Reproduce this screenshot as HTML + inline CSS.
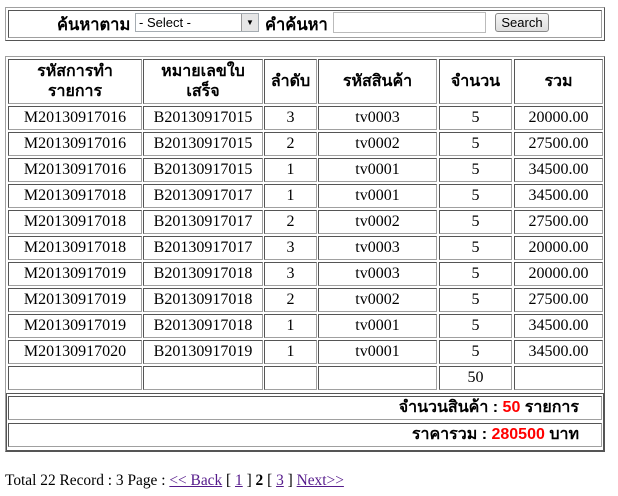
<!DOCTYPE html>
<html><head><meta charset="utf-8"><style>
body{margin:0;width:618px;height:496px;background:#fff;font-family:"Liberation Serif",serif;font-size:16px;color:#000;position:relative}
.th{font-family:"Liberation Sans","DejaVu Sans",sans-serif;font-weight:bold}
.box{position:absolute;border:1px solid;border-color:#a0a0a0 #555 #555 #a0a0a0;box-sizing:border-box}
.cell{position:absolute;border:1px solid;border-color:#555 #a0a0a0 #a0a0a0 #555;box-sizing:border-box;display:flex;align-items:center;justify-content:center;text-align:center;line-height:20px}
.red{color:#f00}
a{color:#551a8b}
</style></head><body>
<div class="box" style="left:5px;top:7px;width:600px;height:34px"></div>
<div class="cell" style="left:8px;top:10px;width:594px;height:28px"></div>
<div class="th" style="position:absolute;left:57px;top:12px;font-size:16.5px">ค้นหาตาม</div>
<div style="position:absolute;left:135px;top:13px;width:124px;height:19px;border:1px solid #a5acb2;box-sizing:border-box;font-family:'Liberation Sans',sans-serif;font-size:13px;line-height:17px;padding-left:3px">- Select -<span style="position:absolute;right:0;top:0;width:16px;height:17px;background:#e6e6e6;border-left:1px solid #999;font-size:8px;text-align:center">▼</span></div>
<div class="th" style="position:absolute;left:265px;top:12px;font-size:16.5px">คำค้นหา</div>
<div style="position:absolute;left:333px;top:12px;width:153px;height:21px;border:1px solid #bbb;box-sizing:border-box"></div>
<div style="position:absolute;left:495px;top:13px;width:54px;height:19px;border:1px solid #888;border-radius:3px;box-sizing:border-box;background:linear-gradient(#f6f6f6,#ddd);font-family:'Liberation Sans',sans-serif;font-size:13px;text-align:center;line-height:17px">Search</div>

<div class="box" style="left:5px;top:56px;width:600px;height:396px"></div>
<div id="t"></div>
<script>
var xs=[[8,134],[143,120],[264,53],[318,119],[439,73],[514,89]];
var h='';
var hd=['รหัสการทำ<br>รายการ','หมายเลขใบ<br>เสร็จ','ลำดับ','รหัสสินค้า','จำนวน','รวม'];
for(var i=0;i<6;i++)h+='<div class="cell th" style="left:'+xs[i][0]+'px;top:59px;width:'+xs[i][1]+'px;height:45px;font-size:16px">'+hd[i]+'</div>';
var rows=[['M20130917016','B20130917015','3','tv0003','5','20000.00'],['M20130917016','B20130917015','2','tv0002','5','27500.00'],['M20130917016','B20130917015','1','tv0001','5','34500.00'],['M20130917018','B20130917017','1','tv0001','5','34500.00'],['M20130917018','B20130917017','2','tv0002','5','27500.00'],['M20130917018','B20130917017','3','tv0003','5','20000.00'],['M20130917019','B20130917018','3','tv0003','5','20000.00'],['M20130917019','B20130917018','2','tv0002','5','27500.00'],['M20130917019','B20130917018','1','tv0001','5','34500.00'],['M20130917020','B20130917019','1','tv0001','5','34500.00'],['','','','','50','']];
for(var r=0;r<rows.length;r++){var y=106+r*26;for(var i=0;i<6;i++)h+='<div class="cell" style="left:'+xs[i][0]+'px;top:'+y+'px;width:'+xs[i][1]+'px;height:24px">'+rows[r][i]+'</div>';}
document.getElementById('t').innerHTML=h;
</script>
<div class="box" style="left:6px;top:393px;width:598px;height:58px;border-color:#555"></div>
<div class="cell th" style="left:8px;top:396px;width:594px;height:24px;justify-content:flex-end;padding-right:22px;font-size:16px">จำนวนสินค้า : <span class="red">&nbsp;50&nbsp;</span> รายการ</div>
<div class="cell th" style="left:8px;top:423px;width:594px;height:24px;justify-content:flex-end;padding-right:22px;font-size:16px">ราคารวม : <span class="red">&nbsp;280500&nbsp;</span> บาท</div>

<div style="position:absolute;left:5px;top:472px;white-space:nowrap;font-size:15.4px">Total 22 Record : 3 Page : <a href="#">&lt;&lt; Back</a> [ <a href="#">1</a> ] <b>2</b> [ <a href="#">3</a> ] <a href="#">Next&gt;&gt;</a></div>
</body></html>
